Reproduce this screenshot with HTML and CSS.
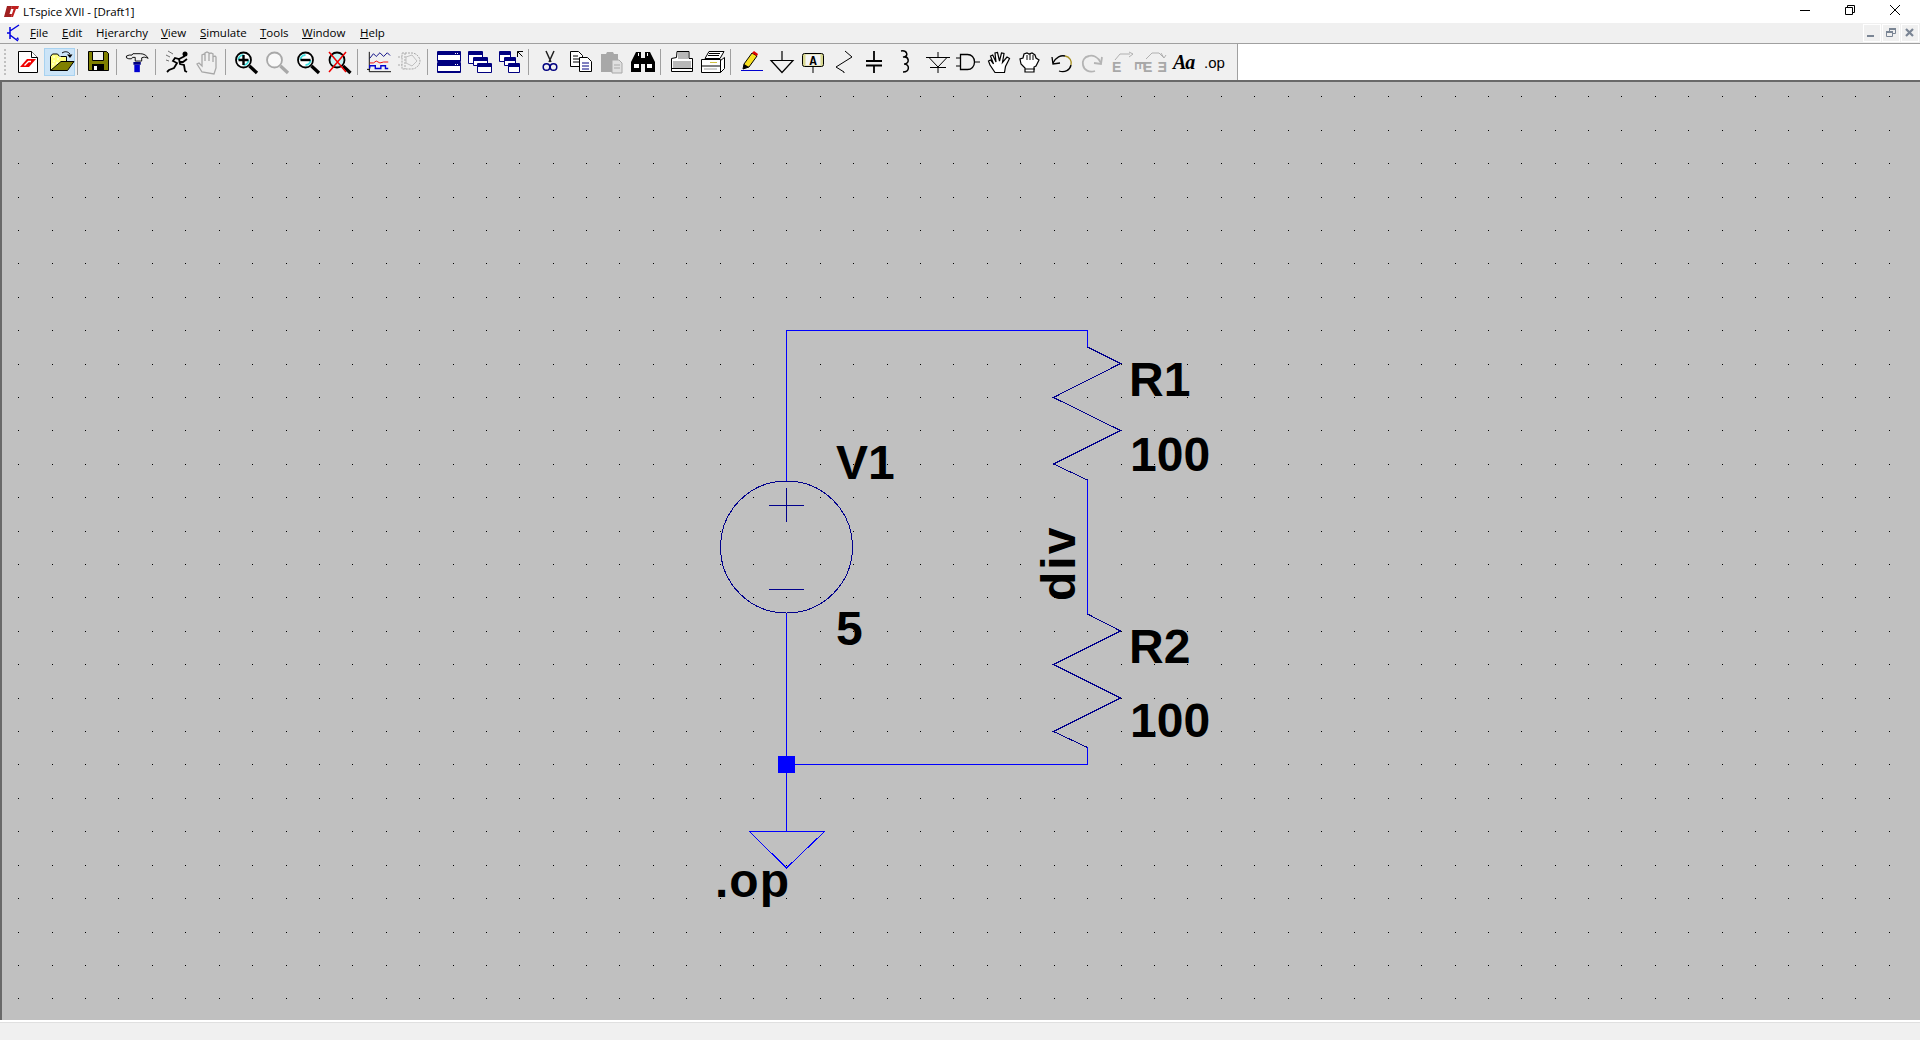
FILE: index.html
```html
<!DOCTYPE html>
<html>

<head>
    <title>LTspice XVII - [Draft1]</title>
    <meta charset="utf-8">
    <link rel="stylesheet" href="styles.css">
</head>

<body>
    <div id="app">
        <!-- title bar -->
        <div class="titlebar">
            <svg class="app-logo" width="16" height="14" viewBox="0 0 16 14">
                <path d="M4 1h5L6.500 9H9l-1 3H1z" fill="#a02020" />
                <path d="M9 1h7l-1 3h-2l-3 8H8l2.600-8H8z" fill="#c02020" />
            </svg>
            <span class="title-text">LTspice XVII - [Draft1]</span>
            <div class="win-controls">
                <svg width="46" height="16" viewBox="0 0 46 16"><path d="M18 8.500h10" stroke="#000" fill="none" /></svg>
                <svg width="46" height="16" viewBox="0 0 46 16"><path d="M18.500 5.500h7v7h-7zM20.500 5.500v-2h7v7h-2" stroke="#000" fill="none" /></svg>
                <svg width="46" height="16" viewBox="0 0 46 16"><path d="M18 3l10 10M28 3L18 13" stroke="#000" fill="none" /></svg>
            </div>
        </div>

        <!-- menu bar -->
        <div class="menubar">
            <svg class="doc-icon" width="16" height="18" viewBox="0 0 16 18">
                <path d="M4 3v12M4 9h-3M4 7l9-6M4 11l8 6" stroke="#0000e0" stroke-width="1.500" fill="none" />
                <path d="M10 15l3 1-1-3z" fill="#0000e0" />
            </svg>
            <a class="menu-item m-file"><u>F</u>ile</a>
            <a class="menu-item m-edit"><u>E</u>dit</a>
            <a class="menu-item m-hier">H<u>i</u>erarchy</a>
            <a class="menu-item m-view"><u>V</u>iew</a>
            <a class="menu-item m-sim"><u>S</u>imulate</a>
            <a class="menu-item m-tools"><u>T</u>ools</a>
            <a class="menu-item m-win"><u>W</u>indow</a>
            <a class="menu-item m-help"><u>H</u>elp</a>
            <div class="mdi-controls">
                <div class="mdi-btn"><svg width="10" height="10" viewBox="0 0 10 10"><path d="M0 7h7v2H0z" fill="#7a8594" /></svg></div>
                <div class="mdi-btn"><svg width="10" height="10" viewBox="0 0 10 10"><path d="M0.500 3.500h6v5h-6zM3.500 3V0.500h6v5H7" stroke="#7a8594" fill="none" /><path d="M0 3h7v2H0zM3 0h7v2H3z" fill="#7a8594" /></svg></div>
                <div class="mdi-btn"><svg width="10" height="10" viewBox="0 0 10 10"><path d="M1 1l7 7M8 1L1 8" stroke="#7a8594" stroke-width="2.200" fill="none" /></svg></div>
            </div>
        </div>

        <!-- tool bar -->
        <div class="toolrow">
            <div class="toolbar">
                <div class="gripper"></div>

                <!-- new -->
                <div class="tool"><svg viewBox="0 0 24 24"><path d="M1.500 1.500h13l6 6v15h-19z" fill="#fff" stroke="#000" /><path d="M14.500 1.500v6h6" fill="#fff" stroke="#000" /><path d="M3 17L10 9h9l-7 8z" fill="#f00000" /><path d="M7.500 15.500l4-4h2.500" fill="none" stroke="#fff" stroke-width="1.300" /></svg></div>
                <!-- open -->
                <div class="tool hot"><svg viewBox="0 0 26 24"><path d="M1.500 20.500v-14l2-2.500h5l2 2.500h7v5" fill="#ffff80" stroke="#000" /><path d="M4 7h2M8 9h2M4 11h2M10 7h2M3 14h2M7 13h2" stroke="#fff" /><path d="M1.500 20.500h17l6.500-9H12z" fill="#808000" stroke="#000" /><path d="M13 3c3-2 6-1.500 8 1" fill="none" stroke="#000" /><path d="M18 4.500h5.500L21 8z" fill="#000" /></svg></div>
                <div class="sep"></div>

                <!-- save -->
                <div class="tool"><svg viewBox="0 0 24 24"><path d="M1.500 1.500h18l2 2v17h-20z" fill="#808000" stroke="#000" /><path d="M5.500 1.500h11v9h-11z" fill="#f0f0f0" stroke="#000" /><path d="M5 14h12v7H5z" fill="#000" /><path d="M7 16h3v4H7z" fill="#fff" /></svg></div>
                <div class="sep"></div>

                <!-- hammer -->
                <div class="tool"><svg viewBox="0 0 26 24"><path d="M0.500 5.500l3-1h3l1-1.500h8c4 0 7 2 8.500 5-3-1.500-5-1.500-7-.5v3.500h-7V7h-3l-1 1.500h-3l-2.500-1z" fill="#f0f0f0" stroke="#000" /><path d="M8 12h8v3H8z" fill="#000080" /><path d="M9 15h6v8H9z" fill="#0000d0" /></svg></div>
                <div class="sep"></div>

                <!-- run -->
                <div class="tool"><svg viewBox="0 0 24 24"><path d="M20 6l-6 3-4-1-2 3 4 2-3 5-5 2-2 2M14 9l1 5 4 1 1 6 2 1M14 12l4 0 4-3" fill="none" stroke="#000" stroke-width="1.800" /><circle cx="20" cy="4" r="2.500" fill="#000" /><path d="M3 1l5 3M1 5l4 2M1 10l3 1" stroke="#707070" fill="none" /></svg></div>
                <!-- halt -->
                <div class="tool"><svg viewBox="0 0 24 24"><path d="M6 22l-5-8 2-1 3 3V5l2-1 1 1v6-8l2-1 2 1v8-7l2-1 2 1v8-5l2-1 1 1v11l-2 6z" fill="#f0f0f0" stroke="#a8a8a8" stroke-width="1.300" /></svg></div>
                <div class="sep"></div>

                <!-- zoom -->
                <div class="tool"><svg viewBox="0 0 24 24"><circle cx="8.500" cy="10" r="7.500" fill="#fff" stroke="#000" stroke-width="1.800" /><path d="M2.500 10a6 6 0 0 1 6-6v2a4 4 0 0 0-4 4zM14.500 10a6 6 0 0 1-6 6v-2a4 4 0 0 0 4-4z" fill="#40e0e0" /><path d="M14.500 16l7.500 7" stroke="#000" stroke-width="3.300" /><path d="M3.500 10h10M8.500 5v10" stroke="#000" stroke-width="2.400" /></svg></div>
                <div class="tool"><svg viewBox="0 0 24 24"><circle cx="8.500" cy="10" r="7.500" fill="#f8f8f8" stroke="#a8a8a8" stroke-width="1.800" /><path d="M14.500 16l7.500 7" stroke="#a8a8a8" stroke-width="3.300" /></svg></div>
                <div class="tool"><svg viewBox="0 0 24 24"><circle cx="8.500" cy="10" r="7.500" fill="#fff" stroke="#000" stroke-width="1.800" /><path d="M2.500 10a6 6 0 0 1 6-6v2a4 4 0 0 0-4 4zM14.500 10a6 6 0 0 1-6 6v-2a4 4 0 0 0 4-4z" fill="#40e0e0" /><path d="M14.500 16l7.500 7" stroke="#000" stroke-width="3.300" /><path d="M3.500 10h10" stroke="#000" stroke-width="2.400" /></svg></div>
                <div class="tool"><svg viewBox="0 0 24 24"><circle cx="9" cy="10" r="7.500" fill="#c8f4f4" stroke="#000" stroke-width="1.800" /><path d="M15 16l7.500 7" stroke="#000" stroke-width="3.300" /><path d="M1 2l17 20M18 2L1 22" stroke="#f00000" stroke-width="1.500" /></svg></div>
                <div class="sep"></div>

                <!-- waveform, schematic -->
                <div class="tool"><svg viewBox="0 0 26 24"><path d="M2.500 1v21.500H26M0 20h3" fill="none" stroke="#000" /><path d="M3 8l4-5 3 3 4-4 4 4 4-4 3 3" fill="none" stroke="#000080" /><path d="M3 13h4l3-2 4 2 4-1h5" fill="none" stroke="#f00000" /><path d="M3 19v-3h6v3h6v-3h5v3h3" fill="none" stroke="#0000d0" stroke-width="1.500" /></svg></div>
                <div class="tool"><svg viewBox="0 0 24 24"><path d="M0 7h4M0 15h4M4 3h10c4 0 8 4 8 8s-4 8-8 8H4zM7 3v16" fill="none" stroke="#a8a8a8" stroke-dasharray="2 1" /><path d="M8 7l6-2 5 6-5 5-6-3z" fill="none" stroke="#c0c0c0" /></svg></div>
                <div class="sep"></div>

                <!-- windows -->
                <div class="tool"><svg viewBox="0 0 24 24"><path d="M0.500 1.500h23v10h-23zM0.500 12.500h23v10h-23z" fill="#fff" stroke="#000080" /><path d="M1 2h22v3H1zM1 13h22v3H1z" fill="#000080" /><path d="M1 10h22v1H1zM1 21h22v1H1z" fill="#000080" /><path d="M18 3h1v1h-1zM20 3h1v1h-1zM18 14h1v1h-1zM20 14h1v1h-1z" fill="#fff" /></svg></div>
                <div class="tool"><svg viewBox="0 0 24 24"><path d="M0.500 1.500h14v12h-14z" fill="#fff" stroke="#000080" /><path d="M1 2h13v3H1z" fill="#000080" /><path d="M5.500 7.500h14v8h-14z" fill="#fff" stroke="#000080" /><path d="M6 8h13v3H6z" fill="#000080" /><path d="M9.500 13.500h14v9h-14z" fill="#fff" stroke="#000080" /><path d="M10 14h13v3H10z" fill="#000080" /></svg></div>
                <div class="tool"><svg viewBox="0 0 24 24"><path d="M0.500 1.500h11v10h-11z" fill="#fff" stroke="#000080" /><path d="M1 2h10v3H1z" fill="#000080" /><path d="M5.500 7.500h11v8h-11z" fill="#fff" stroke="#000080" /><path d="M6 8h10v3H6z" fill="#000080" /><path d="M9.500 13.500h11v9h-11z" fill="#fff" stroke="#000080" /><path d="M10 14h10v3H10z" fill="#000080" /><path d="M18.500 7V1.500H24M18.500 1.500l5 5" fill="none" stroke="#000" /></svg></div>
                <div class="sep"></div>

                <!-- cut, copy, paste, find -->
                <div class="tool"><svg viewBox="0 0 24 24"><path d="M8 1l5 11M16 1l-5 11" stroke="#202020" stroke-width="1.500" fill="none" /><circle cx="8.500" cy="17" r="3.300" fill="none" stroke="#000080" stroke-width="1.500" /><circle cx="15.500" cy="17" r="3.300" fill="none" stroke="#000080" stroke-width="1.500" /></svg></div>
                <div class="tool"><svg viewBox="0 0 24 24"><path d="M1.500 1.500h8l4 4v11h-12z" fill="#fff" stroke="#000" /><path d="M4 6h5M4 9h7M4 12h7" stroke="#000" /><path d="M10.500 7.500h8l4 4v10h-12z" fill="#fff" stroke="#000" /><path d="M13 13h7M13 16h7M13 19h7" stroke="#000080" /></svg></div>
                <div class="tool"><svg viewBox="0 0 24 24"><path d="M1 4h5l1-2h6l1 2h4v18H1z" fill="#a8a8a8" /><path d="M12 10h7l3 3v10H12z" fill="#e0e0e0" stroke="#a8a8a8" /><path d="M14 15h6M14 18h6" stroke="#a8a8a8" /></svg></div>
                <div class="tool"><svg viewBox="0 0 24 24"><path d="M5 2h5v20H0V12zM14 2h5l5 10v10H14z" fill="#000" /><path d="M10 8h4v6h-4z" fill="#000" /><path d="M3 14h5v4H3zM16 14h5v4h-5zM7 3h1v3H7zM16 3h1v3h-1z" fill="#fff" /></svg></div>
                <div class="sep"></div>

                <!-- print, setup -->
                <div class="tool"><svg viewBox="0 0 24 24"><path d="M7 1.500h12v7h3.500v13h-21v-13l5-1z" fill="#fff" stroke="#000" /><path d="M8 2h10v7H8zM3 11h18v7H3z" fill="#b8b8b8" /><path d="M1.500 18.500h21" stroke="#000" /></svg></div>
                <div class="tool"><svg viewBox="0 0 24 24"><path d="M8 1.500h15l-4 7H4z" fill="#fff" stroke="#000" /><path d="M8 3.500h11M7 5.500h11" stroke="#000" /><path d="M0.500 9.500h19v13h-19zM19.500 22.500l4-4v-11l-4 3" fill="#fff" stroke="#000" /><path d="M1 16h18" stroke="#000" /><path d="M9 12h7v1H9z" fill="#d0c040" /><path d="M3 18h13v2H3z" fill="#d0d0d0" /></svg></div>
                <div class="sep"></div>

                <!-- wire, ground, label, resistor, cap, inductor, diode, component -->
                <div class="tool"><svg viewBox="0 0 24 24"><path d="M1 20.500h22" stroke="#0000d0" fill="none" /><path d="M3 19l1-5 8-11 5 3-8 11z" fill="#f8e020" stroke="#000" /><path d="M12 3l2-2 4 3-1 2z" fill="#e00000" /><path d="M3 19l1-5 5 3z" fill="#000" /></svg></div>
                <div class="tool"><svg viewBox="0 0 24 24"><path d="M11 1v9.500M0 10.500h22L11 22.500z" fill="none" stroke="#000" stroke-width="1.200" /></svg></div>
                <div class="tool"><svg viewBox="0 0 24 24"><rect x="0.500" y="3.500" width="21" height="13" rx="2" fill="#d8d890" stroke="#000" /><rect x="3.500" y="4.500" width="15" height="11" fill="#f4f4f4" /><text x="11" y="14.500" class="icon-letter">A</text><path d="M11 17v6" stroke="#000" /></svg></div>
                <div class="tool"><svg viewBox="0 0 24 24"><path d="M12 1l7 6-16 10 8 5v1" fill="none" stroke="#000" /></svg></div>
                <div class="tool"><svg viewBox="0 0 24 24"><path d="M10 1v9M2 11h16M2 15.500h16M10 16v7" fill="none" stroke="#000" stroke-width="1.800" /></svg></div>
                <div class="tool"><svg viewBox="0 0 24 24"><path d="M6 1c6-1 8 5 3 6h-1c6-1 7 6 2 7h-1c6 0 6 8-1 8" fill="none" stroke="#000" stroke-width="1.500" /></svg></div>
                <div class="tool"><svg viewBox="0 0 24 24"><path d="M12 2v5M0 7.500h24M3 7.500L12 17M21 7.500L12 17M4 17.500h16M12 17v6" fill="none" stroke="#000" /></svg></div>
                <div class="tool"><svg viewBox="0 0 24 24"><path d="M-1 8h4M-1 16h4M18 12h5" stroke="#000" /><path d="M3.500 4.500h7c4 0 7 3 7 7.500s-3 7.500-7 7.500h-7z" fill="none" stroke="#000" stroke-width="1.300" /></svg></div>

                <!-- move, drag, undo, redo, rotate, mirror, text, spice -->
                <div class="tool"><svg viewBox="0 0 24 24"><path d="M7 22.500L2 15 .5 11l2-1 3 4L2.500 6l2.200-1 3.300 7L7 3l2.500-.5 2 8.500L13.500 3l2.500.5-1.500 9L19 7l2.500 1.500-4 8-1 6z" fill="#fff" stroke="#000" stroke-width="1.200" /></svg></div>
                <div class="tool"><svg viewBox="0 0 24 24"><path d="M6 22v-4L2 14l-1-5 3-1 1-4 3-1 2 1 3-1 3 2 1 3 3 2-3 6-2 1v5z" fill="#fff" stroke="#000" stroke-width="1.200" /><path d="M6 19h10M8 5v5M11 4v6M14 5v5" stroke="#000" fill="none" /></svg></div>
                <div class="tool"><svg viewBox="0 0 24 24"><path d="M3 13C6 7 11 5 15 6" fill="none" stroke="#000" stroke-width="1.300" /><path d="M15 6c5 1 7 5 6 9" fill="none" stroke="#a89020" stroke-width="1.300" /><path d="M21 15c-1 5-6 8-12 6" fill="none" stroke="#000" stroke-width="1.300" /><path d="M2 7l1 7 7-1" fill="none" stroke="#000" stroke-width="1.300" /></svg></div>
                <div class="tool"><svg viewBox="0 0 24 24"><path d="M20 13C17 7 12 5 8 6c-5 1-7 5-6 9 1 5 6 8 12 6" fill="none" stroke="#b4b4b4" stroke-width="1.800" /><path d="M21 7l-1 7-7-1" fill="none" stroke="#b4b4b4" stroke-width="1.800" /></svg></div>
                <div class="tool"><svg viewBox="0 0 24 24"><path d="M3 10l5-6h10M17 2l4 2-4 3" fill="none" stroke="#b0b0b0" /><text x="0" y="22" class="icon-gray">E</text><text x="23" y="11" class="icon-gray" transform="rotate(90 23 11)">E</text></svg></div>
                <div class="tool"><svg viewBox="0 0 24 24"><path d="M3 9l6-6h7l5 5M18 3l3 5 2-3" fill="none" stroke="#b0b0b0" /><text x="0" y="22" class="icon-gray">E</text><text x="-24" y="22" class="icon-gray" transform="scale(-1 1)">E</text></svg></div>
                <div class="tool tool-text"><span class="tool-aa">Aa</span></div>
                <div class="tool tool-text"><span class="tool-op">.op</span></div>
            </div>
            <div class="toolrow-rest"></div>
        </div>

        <!-- schematic -->
        <div class="canvas">
            <svg id="sheet" class="sheet" width="1918" height="938" viewBox="2 82 1918 938">
                <g id="grid"></g>

                <!-- wires -->
                <path class="wire" d="M786.500 481V330.500H1087.500V347" />
                <path class="wire" d="M1087.500 480V614" />
                <path class="wire" d="M786.500 613V831" />
                <path class="wire" d="M786.500 764.500H1087.500V747" />
                <rect class="junction" x="778" y="756" width="17" height="17" />

                <!-- V1 -->
                <circle class="part" cx="786.500" cy="547" r="66" />
                <path class="part" d="M769 505.500H804M786.500 488V522M769 589.500H804" />

                <!-- R1, R2 -->
                <path class="part" d="M1087.500 347L1120.500 363.500L1053.500 397.500L1120.500 430.500L1053.500 464L1087.500 480" />
                <path class="part" d="M1087.500 614L1120.500 631L1053.500 664.500L1120.500 698L1053.500 731.500L1087.500 747.500" />

                <!-- ground -->
                <path class="wire" d="M749.500 831.500H824.500L786.500 868Z" />

                <!-- labels -->
                <text class="label" x="1129" y="396">R1</text>
                <text class="label" x="1130" y="471">100</text>
                <text class="label" x="836" y="479">V1</text>
                <text class="label" x="836" y="645">5</text>
                <text class="label" x="1129" y="663">R2</text>
                <text class="label" x="1130" y="737">100</text>
                <text class="label op" x="715" y="897">.op</text>
                <text class="label div" transform="translate(1075 601) rotate(-90)">div</text>
            </svg>
        </div>

        <div class="statusbar"></div>
    </div>
    <script src="grid.js"></script>
</body>

</html>
```

FILE: styles.css
```css
html,
body {
    margin: 0;
    padding: 0;
    background-color: #f0f0f0;
}

#app {
    width: 1920px;
    height: 1040px;
    display: flex;
    flex-direction: column;
    overflow: hidden;
}

body {
    font-family: "Open Sans", "Noto Sans", sans-serif;
    font-size: 12px;
    color: #000000;
}

.titlebar {
    height: 23px;
    background-color: #ffffff;
    display: flex;
    align-items: center;
    padding-left: 3px;
}

.app-logo {
    margin-right: 4px;
}

.title-text {
    font-size: 11.5px;
    letter-spacing: -0.1px;
    margin-top: -1px;
}

.win-controls {
    margin-left: auto;
    display: flex;
    margin-right: 3px;
}

.win-controls svg {
    margin-top: -3px;
    margin-right: -1px;
}

.menubar {
    height: 20px;
    background-color: #f0f0f0;
    border-bottom: 1px solid #a0a0a0;
    display: flex;
    align-items: center;
    padding-left: 6px;
}

.doc-icon {
    margin-right: 8px;
}

.menu-item {
    font-size: 11.5px;
    white-space: nowrap;
    margin-top: -1px;
}

.m-file { width: 32px; }
.m-edit { width: 34px; }
.m-hier { width: 65px; }
.m-view { width: 39px; }
.m-sim { width: 60px; }
.m-tools { width: 42px; }
.m-win { width: 58px; }

.mdi-controls {
    margin-left: auto;
    display: flex;
    gap: 1px;
    padding-right: 1px;
}

.mdi-btn {
    width: 16px;
    height: 16px;
    border: 1px solid #ffffff;
    background-color: #f0f0f0;
    display: flex;
    align-items: center;
    justify-content: center;
}

.toolrow {
    height: 36px;
    display: flex;
}

.toolbar {
    width: 1238px;
    box-sizing: border-box;
    border-right: 1px solid #a0a0a0;
    background-color: #f0f0f0;
    display: flex;
    align-items: center;
    padding-left: 13px;
}

.toolrow-rest {
    flex: 1;
    background-color: #ffffff;
}

.gripper {
    width: 2px;
    height: 26px;
    margin-left: -9px;
    margin-right: 7px;
    background-image: linear-gradient(#c0c0c0 50%, transparent 50%);
    background-size: 2px 4px;
}

.tool {
    width: 31px;
    height: 28px;
    box-sizing: border-box;
    display: flex;
    align-items: center;
    padding-left: 4px;
    flex: none;
}

.tool svg {
    width: 24px;
    height: 24px;
    overflow: visible;
}

.tool.hot {
    background-color: #cce4f7;
    border: 1px solid #a8d2f0;
    padding-left: 4px;
}

.tool.hot svg {
    width: 26px;
}

.tool-text {
    padding-left: 3px;
}

.sep {
    width: 8px;
    height: 26px;
    flex: none;
}

.sep::after {
    content: "";
    display: block;
    width: 1px;
    height: 26px;
    margin-left: 2px;
    background-color: #a0a0a0;
}

.icon-letter {
    font-family: "Liberation Mono", monospace;
    font-weight: bold;
    font-size: 12px;
    text-anchor: middle;
    fill: #000000;
}

.icon-gray {
    font-family: "Liberation Sans", sans-serif;
    font-weight: bold;
    font-size: 14px;
    fill: #a8a8a8;
}

.tool-aa {
    font-family: "Liberation Serif", serif;
    font-style: italic;
    font-weight: bold;
    font-size: 20px;
    letter-spacing: -1px;
}

.tool-op {
    font-family: "Liberation Sans", sans-serif;
    font-size: 15px;
}

.canvas {
    height: 938px;
    border-top: 2px solid #696969;
    border-left: 2px solid #696969;
    background-color: #c0c0c0;
}

.sheet {
    display: block;
}

.wire {
    fill: none;
    stroke: #0000ff;
    stroke-width: 1;
    shape-rendering: crispEdges;
}

.part {
    fill: none;
    stroke: #00008c;
    stroke-width: 1;
    shape-rendering: crispEdges;
}

.junction {
    fill: #0000ff;
}

.label {
    font-family: "Liberation Sans", Arial, sans-serif;
    font-weight: bold;
    font-size: 48px;
    fill: #000000;
}

.op {
    letter-spacing: 1px;
}

.div {
    letter-spacing: 2px;
}

.dot {
    fill: #000000;
}

.statusbar {
    flex: 1;
    background-color: #f0f0f0;
    border-top: 2px solid #ffffff;
    box-shadow: inset 0 1px 0 #e0e0e0;
}
```

FILE: grid.js
```js
// dots of the schematic grid, one every 33.4px
var d = "";
for (var r = 0; r < 28; r++) {
    for (var c = 0; c < 58; c++) {
        var x = Math.round(18.3 + c * 33.4);
        var y = Math.round(96.3 + r * 33.41);
        d += "M" + x + " " + y + "h1v1h-1z";
    }
}
var p = document.createElementNS("http://www.w3.org/2000/svg", "path");
p.setAttribute("d", d);
p.setAttribute("class", "dot");
document.getElementById("grid").appendChild(p);
```
